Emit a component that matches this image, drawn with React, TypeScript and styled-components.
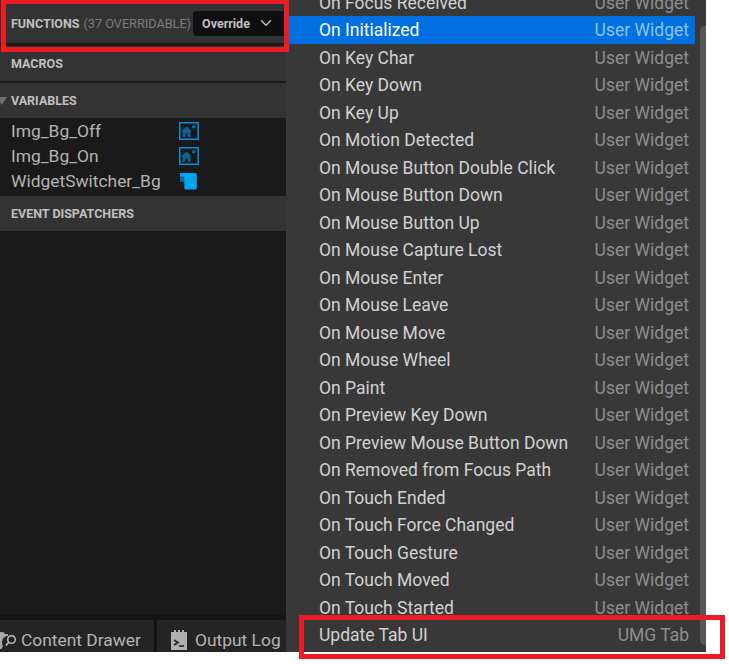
import React from 'react';
import styled, { createGlobalStyle } from 'styled-components';
import { ChevronDown } from 'lucide-react';

const GlobalStyle = createGlobalStyle`
  html, body {
    margin: 0;
    padding: 0;
    background: #fff;
  }
  body {
    font-family: Roboto, "Liberation Sans", sans-serif;
  }
`;

const Page = styled.div`
  position: relative;
  width: 729px;
  height: 664px;
  overflow: hidden;
`;

const Editor = styled.div`
  display: flex;
  width: 706px;
  height: 652px;
  background: #383838;
`;

const SidePanel = styled.div`
  display: flex;
  flex-direction: column;
  width: 286px;
  flex-shrink: 0;
  background: #1a1a1a;
`;

const SectionHeader = styled.div<{ $height: number; $gap?: number; $top?: number }>`
  position: relative;
  display: flex;
  align-items: center;
  box-sizing: border-box;
  height: ${(p) => p.$height}px;
  margin-bottom: ${(p) => p.$gap ?? 0}px;
  padding: ${(p) => p.$top ?? 0}px 0 0 11px;
  background: #333333;
  color: #c0c0c0;
  font-size: 12.5px;
  font-weight: 700;
  white-space: nowrap;
`;

const Overridable = styled.span`
  margin-left: 4px;
  color: #7c7c7c;
  font-size: 12.7px;
  font-weight: 400;
`;

const OverrideButton = styled.div`
  display: flex;
  align-items: center;
  gap: 7px;
  height: 25px;
  width: 91px;
  margin-left: 2px;
  padding-left: 9px;
  box-sizing: border-box;
  border-radius: 4px 0 0 4px;
  background: #0f0f0f;
  color: #c0c0c0;
  font-size: 12.5px;
  font-weight: 700;
`;

const Caret = styled.span`
  position: absolute;
  left: -3px;
  top: 14px;
  width: 0;
  height: 0;
  border-left: 5px solid transparent;
  border-right: 5px solid transparent;
  border-top: 8px solid #6e6e6e;
`;

const VariableList = styled.div`
  display: flex;
  flex-direction: column;
  height: 78px;
`;

const VariableRow = styled.div`
  display: flex;
  align-items: center;
  height: 25px;
  padding-left: 11px;
  color: #b4b4b4;
  font-size: 17.4px;
`;

const VariableName = styled.span`
  width: 168px;
`;

const Filler = styled.div`
  flex: 1;
`;

const BottomBar = styled.div`
  display: flex;
  height: 37px;
  box-sizing: border-box;
  padding-top: 5px;
  gap: 3px;
  background: #141414;
`;

const DrawerTab = styled.div<{ $width: number; $pad: number; $gap: number }>`
  display: flex;
  align-items: center;
  gap: ${(p) => p.$gap}px;
  width: ${(p) => p.$width}px;
  padding: 8px 0 0 ${(p) => p.$pad}px;
  box-sizing: border-box;
  background: #242424;
  color: #b4b4b4;
  font-size: 17.4px;
  white-space: nowrap;
`;

const Menu = styled.div`
  position: relative;
  flex: 1;
  margin-left: 2px;
  overflow: hidden;
`;

const MenuList = styled.div`
  display: flex;
  flex-direction: column;
  width: 407px;
  margin-top: -11.5px;
`;

const MenuRow = styled.div<{ $active?: boolean }>`
  display: flex;
  align-items: center;
  justify-content: space-between;
  height: 27.5px;
  flex-shrink: 0;
  padding: 1px 6px 0 31px;
  box-sizing: border-box;
  font-size: 17.5px;
  white-space: nowrap;
  color: ${(p) => (p.$active ? '#ffffff' : '#d2d2d2')};
  background: ${(p) => (p.$active ? '#0070e0' : 'transparent')};
`;

const MenuTag = styled.span<{ $active?: boolean }>`
  color: ${(p) => (p.$active ? '#8cc4f5' : '#8e8e8e')};
`;

const Scrollbar = styled.div`
  position: absolute;
  top: 26px;
  right: 0;
  width: 6px;
  bottom: 7px;
  border-radius: 5px 0 0 5px;
  background: #575757;
`;

const Highlight = styled.div<{ $x: number; $y: number; $w: number; $h: number }>`
  position: absolute;
  left: ${(p) => p.$x}px;
  top: ${(p) => p.$y}px;
  width: ${(p) => p.$w}px;
  height: ${(p) => p.$h}px;
  box-sizing: border-box;
  border: 5px solid #ed1c24;
  pointer-events: none;
`;

const ImageIcon = () => (
  <svg width="20" height="18" viewBox="0 0 20 18">
    <rect x="0.75" y="0.75" width="18.5" height="16.5" fill="#141a20" stroke="#0a8fd6" strokeWidth="1.5" />
    <path d="M2 9.5 L7.5 4.5 L13 9.5 H11.5 V15 H8.6 V11.5 H6.4 V15 H3.5 V9.5 Z" fill="#0f5f8f" />
    <circle cx="14.7" cy="4.7" r="1.8" fill="#0f6a9e" />
  </svg>
);

const SwitcherIcon = () => (
  <svg width="20" height="18" viewBox="0 0 20 18">
    <path d="M1 1 H16.3 A1.5 1.5 0 0 1 17.8 2.5 V16 A1.5 1.5 0 0 1 16.3 17.5 H6.8 A1.5 1.5 0 0 1 5.3 16 V9.5 H1 Z" fill="#00a5f2" />
    <rect x="1" y="4.5" width="4.3" height="5" fill="#0a6aa0" />
  </svg>
);

const FolderSearchIcon = () => (
  <svg width="16" height="20" viewBox="0 0 16 20">
    <path d="M-4 2 H2 A3 3 0 0 1 5 4 H8 V6 A6.5 6.5 0 0 0 3 16 L1.5 19 H-4 Z" fill="#a8a8a8" />
    <circle cx="11.5" cy="9.5" r="3.8" fill="none" stroke="#c4c4c4" strokeWidth="1.4" />
    <path d="M8.7 12.2 L6 15.5" stroke="#c4c4c4" strokeWidth="1.6" />
  </svg>
);

const LogIcon = () => (
  <svg width="16" height="20" viewBox="0 0 16 20">
    <path d="M0 2 H3 V0 H5 V2 H7 V0 H9 V2 H11 V0 H13 V2 H16 V20 H0 Z" fill="#b0b0b0" />
    <path d="M3 10 L7 12.5 L3 15" fill="none" stroke="#242424" strokeWidth="1.6" />
    <path d="M8 16 H13" stroke="#242424" strokeWidth="1.6" />
  </svg>
);

const items: [string, string][] = [
  ['On Focus Received', 'User Widget'],
  ['On Initialized', 'User Widget'],
  ['On Key Char', 'User Widget'],
  ['On Key Down', 'User Widget'],
  ['On Key Up', 'User Widget'],
  ['On Motion Detected', 'User Widget'],
  ['On Mouse Button Double Click', 'User Widget'],
  ['On Mouse Button Down', 'User Widget'],
  ['On Mouse Button Up', 'User Widget'],
  ['On Mouse Capture Lost', 'User Widget'],
  ['On Mouse Enter', 'User Widget'],
  ['On Mouse Leave', 'User Widget'],
  ['On Mouse Move', 'User Widget'],
  ['On Mouse Wheel', 'User Widget'],
  ['On Paint', 'User Widget'],
  ['On Preview Key Down', 'User Widget'],
  ['On Preview Mouse Button Down', 'User Widget'],
  ['On Removed from Focus Path', 'User Widget'],
  ['On Touch Ended', 'User Widget'],
  ['On Touch Force Changed', 'User Widget'],
  ['On Touch Gesture', 'User Widget'],
  ['On Touch Moved', 'User Widget'],
  ['On Touch Started', 'User Widget'],
  ['Update Tab UI', 'UMG Tab'],
];

const variables = [
  { name: 'Img_Bg_Off', icon: <ImageIcon /> },
  { name: 'Img_Bg_On', icon: <ImageIcon /> },
  { name: 'WidgetSwitcher_Bg', icon: <SwitcherIcon /> },
];

export default function App() {
  return (
    <Page>
      <GlobalStyle />
      <Editor>
        <SidePanel>
          <SectionHeader $height={43} $gap={3} $top={3}>
            FUNCTIONS
            <Overridable>(37 OVERRIDABLE)</Overridable>
            <OverrideButton>
              Override
              <ChevronDown size={18} strokeWidth={2} />
            </OverrideButton>
          </SectionHeader>
          <SectionHeader $height={35} $gap={2}>MACROS</SectionHeader>
          <SectionHeader $height={35}>
            <Caret />
            VARIABLES
          </SectionHeader>
          <VariableList>
            {variables.map((v) => (
              <VariableRow key={v.name}>
                <VariableName>{v.name}</VariableName>
                {v.icon}
              </VariableRow>
            ))}
          </VariableList>
          <SectionHeader $height={35}>EVENT DISPATCHERS</SectionHeader>
          <Filler />
          <BottomBar>
            <DrawerTab $width={154} $pad={0} $gap={5}>
              <FolderSearchIcon />
              Content Drawer
            </DrawerTab>
            <DrawerTab $width={129} $pad={14} $gap={8}>
              <LogIcon />
              Output Log
            </DrawerTab>
          </BottomBar>
        </SidePanel>
        <Menu>
          <MenuList>
            {items.map(([label, tag]) => {
              const active = label === 'On Initialized';
              return (
                <MenuRow key={label} $active={active}>
                  {label}
                  <MenuTag $active={active}>{tag}</MenuTag>
                </MenuRow>
              );
            })}
          </MenuList>
          <Scrollbar />
        </Menu>
      </Editor>
      <Highlight $x={1} $y={-1} $w={288} $h={53} />
      <Highlight $x={299} $y={615} $w={426} $h={44} />
    </Page>
  );
}
